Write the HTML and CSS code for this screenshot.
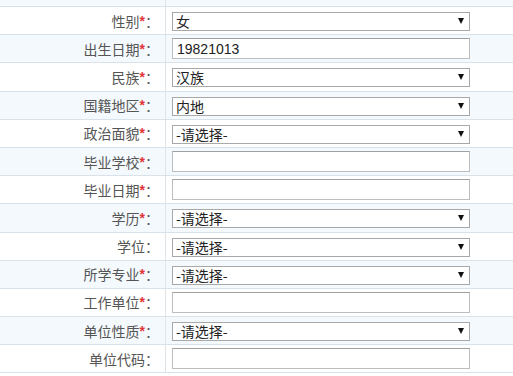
FILE: index.html
```html
<!DOCTYPE html>
<html lang="zh">
<head>
<meta charset="utf-8">
<link rel="stylesheet" href="styles.css">
</head>
<body>
<div class="form">
  <div class="row top-strip"><div class="label"></div><div class="field"></div></div>
  <div class="row"><div class="label">性别<span class="req">*</span>：</div><div class="field"><div class="sel"><select><option>女</option></select></div></div></div>
  <div class="row alt"><div class="label">出生日期<span class="req">*</span>：</div><div class="field"><input class="txt" type="text" value="19821013"></div></div>
  <div class="row"><div class="label">民族<span class="req">*</span>：</div><div class="field"><div class="sel"><select><option>汉族</option></select></div></div></div>
  <div class="row alt"><div class="label">国籍地区<span class="req">*</span>：</div><div class="field"><div class="sel"><select><option>内地</option></select></div></div></div>
  <div class="row"><div class="label">政治面貌<span class="req">*</span>：</div><div class="field"><div class="sel"><select><option>-请选择-</option></select></div></div></div>
  <div class="row alt"><div class="label">毕业学校<span class="req">*</span>：</div><div class="field"><input class="txt" type="text"></div></div>
  <div class="row"><div class="label">毕业日期<span class="req">*</span>：</div><div class="field"><input class="txt" type="text"></div></div>
  <div class="row alt"><div class="label">学历<span class="req">*</span>：</div><div class="field"><div class="sel"><select><option>-请选择-</option></select></div></div></div>
  <div class="row"><div class="label">学位：</div><div class="field"><div class="sel"><select><option>-请选择-</option></select></div></div></div>
  <div class="row alt"><div class="label">所学专业<span class="req">*</span>：</div><div class="field"><div class="sel"><select><option>-请选择-</option></select></div></div></div>
  <div class="row"><div class="label">工作单位<span class="req">*</span>：</div><div class="field"><input class="txt" type="text"></div></div>
  <div class="row alt"><div class="label">单位性质<span class="req">*</span>：</div><div class="field"><div class="sel"><select><option>-请选择-</option></select></div></div></div>
  <div class="row"><div class="label">单位代码：</div><div class="field"><input class="txt" type="text"></div></div>
</div>
</body>
</html>
```
FILE: styles.css
```css
html, body {
  margin: 0;
  padding: 0;
  background: #ffffff;
}
body {
  font-family: "Noto Sans CJK SC", "Liberation Sans", sans-serif;
  font-size: 14px;
  color: #555;
  overflow: hidden;
}
.form {
  display: flex;
  flex-direction: column;
}
.row {
  display: flex;
  height: 28.2px;
  box-sizing: border-box;
  border-bottom: 1px solid #d9e2e8;
  background: #ffffff;
}
.row.alt, .row.top-strip {
  background: #f4f9fd;
}
.row.top-strip {
  height: 7px;
}
.label {
  width: 166px;
  box-sizing: border-box;
  border-right: 1px solid #dde5ea;
  text-align: right;
  padding-right: 6px;
  display: flex;
  align-items: center;
  justify-content: flex-end;
  line-height: 1;
  white-space: nowrap;
}
.req {
  color: #e0353b;
  font-family: "Liberation Sans", sans-serif;
  font-size: 14px;
  font-weight: bold;
}
.field {
  flex: 1;
  display: flex;
  align-items: center;
  padding-left: 6px;
}
.txt {
  width: 298px;
  height: 21px;
  box-sizing: border-box;
  border: 1px solid #bdbdbd;
  border-top-color: #a0a0a0;
  background: #fff;
  padding: 0 4px;
  font-family: "Liberation Sans", "Noto Sans CJK SC", sans-serif;
  font-size: 14px;
  color: #222;
  margin: 0;
  outline: none;
}
.sel {
  position: relative;
  width: 298px;
  height: 19px;
}
.sel select {
  appearance: none;
  -webkit-appearance: none;
  width: 100%;
  height: 19px;
  box-sizing: border-box;
  border: 1px solid #a8a8a8;
  border-radius: 0;
  background: #fff;
  padding: 0 3px;
  margin: 0;
  font-family: "Noto Sans CJK SC", "Liberation Sans", sans-serif;
  font-size: 14px;
  line-height: 17px;
  color: #222;
  outline: none;
}
.sel::after {
  content: "";
  position: absolute;
  right: 6px;
  top: 7px;
  width: 0;
  height: 0;
  border-left: 3.5px solid transparent;
  border-right: 3.5px solid transparent;
  border-top: 6px solid #111;
  pointer-events: none;
}
```
